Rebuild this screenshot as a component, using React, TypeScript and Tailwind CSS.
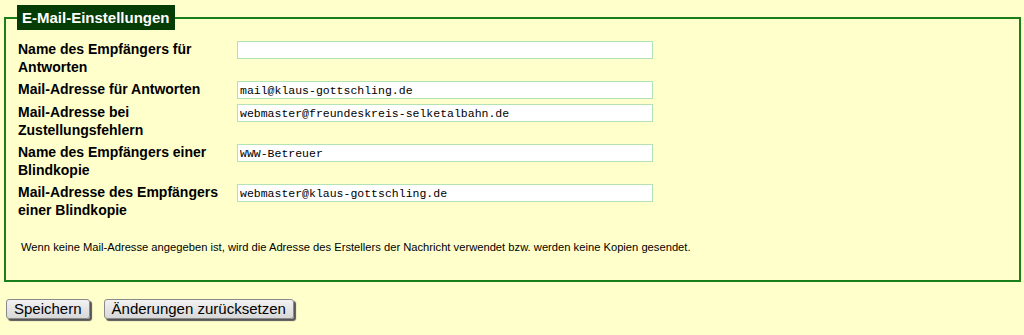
import React from "react";

const rows = [
  { label: "Name des Empfängers für Antworten", value: "" },
  { label: "Mail-Adresse für Antworten", value: "mail@klaus-gottschling.de" },
  { label: "Mail-Adresse bei Zustellungsfehlern", value: "webmaster@freundeskreis-selketalbahn.de" },
  { label: "Name des Empfängers einer Blindkopie", value: "WWW-Betreuer" },
  { label: "Mail-Adresse des Empfängers einer Blindkopie", value: "webmaster@klaus-gottschling.de" },
];

export default function App() {
  return (
    <div className="w-[1024px] h-[335px] bg-[#ffffcc] pt-[5px] font-['Liberation_Sans',Arial,sans-serif] text-black">
      <fieldset className="ml-[4px] w-[1017px] border-2 border-[#1a7f1a] pl-[12px] pr-3 pt-[10px] pb-[26px] m-0">
        <legend className="-ml-[1px] px-[5px] h-[25px] leading-[25px] bg-[#063c06] text-white font-bold text-[15px]">
          E-Mail-Einstellungen
        </legend>

        {/* settings rows */}
        <div className="flex flex-col gap-[4px]">
          {rows.map((r) => (
            <div key={r.label} className="flex items-start">
              <div className="w-[219px] shrink-0">
                <div className="w-[205px] text-[14px] leading-[18px] font-bold">{r.label}</div>
              </div>
              <input
                type="text"
                defaultValue={r.value}
                className="w-[416px] h-[18px] mt-[1px] bg-white border border-[#b3e3b3] px-[2px] text-[11.5px] font-['Liberation_Mono','Courier_New',monospace] outline-none"
              />
            </div>
          ))}
        </div>

        <p className="mt-[21px] pl-[3px] text-[11.2px] leading-[14px]">
          Wenn keine Mail-Adresse angegeben ist, wird die Adresse des Erstellers der Nachricht verwendet bzw. werden keine Kopien gesendet.
        </p>
      </fieldset>

      <div className="flex gap-[14px] pl-[6px] mt-[17px]">
        <button className="h-[20px] px-[7px] bg-gradient-to-b from-[#f2f2f2] to-[#d8d8d8] border border-[#8a8a8a] rounded-[3px] shadow-[2px_2px_1px_#555] text-[15px] leading-[18px]">
          Speichern
        </button>
        <button className="h-[20px] px-[7px] bg-gradient-to-b from-[#f2f2f2] to-[#d8d8d8] border border-[#8a8a8a] rounded-[3px] shadow-[2px_2px_1px_#555] text-[15px] leading-[18px]">
          Änderungen zurücksetzen
        </button>
      </div>
    </div>
  );
}
